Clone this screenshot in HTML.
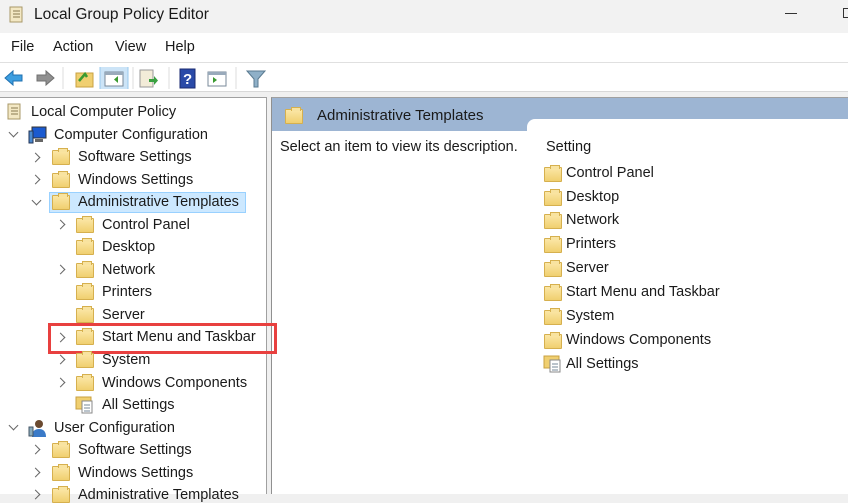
<!DOCTYPE html>
<html><head><meta charset="utf-8"><style>
*{margin:0;padding:0;box-sizing:border-box}
body{width:848px;height:494px;overflow:hidden;background:#f0f0f0;font-family:"Liberation Sans",sans-serif;font-size:14.5px;color:#1a1a1a;position:relative}
.a{position:absolute;white-space:nowrap}
.f{position:absolute;width:18px;height:15px;background:linear-gradient(#fbe7a6,#f0cf70);border:1px solid #d6b04e;border-radius:1px}
.f:before{content:"";position:absolute;right:1px;top:-3px;width:8px;height:3px;background:#f8e3a0;border:1px solid #d6b04e;border-bottom:none}
.ch{position:absolute;width:7px;height:7px;border-right:1.3px solid #666;border-bottom:1.3px solid #666}
.r{transform:rotate(-45deg)}
.d{transform:rotate(45deg)}
</style></head><body>
<!-- title -->
<div class="a" style="left:0;top:0;width:848px;height:33px;background:#f2f2f2"></div>
<svg class="a" style="left:7px;top:5px" width="18" height="20"><rect x="3" y="2" width="12" height="15" fill="#f3e8c4" stroke="#a89868"/><path d="M6 6h7M6 9h7M6 12h7" stroke="#8a7a50"/></svg>
<div class="a" style="left:34px;top:6px;font-size:15.5px">Local Group Policy Editor</div>
<div class="a" style="left:785px;top:13px;width:12px;height:1px;background:#333"></div>
<div class="a" style="left:843px;top:8px;width:10px;height:10px;border:1px solid #333"></div>
<!-- menu -->
<div class="a" style="left:0;top:33px;width:848px;height:29px;background:#fff"></div>
<div class="a" style="left:11px;top:39px">File</div>
<div class="a" style="left:53px;top:39px">Action</div>
<div class="a" style="left:115px;top:39px">View</div>
<div class="a" style="left:165px;top:39px">Help</div>
<!-- toolbar -->
<div class="a" style="left:0;top:62px;width:848px;height:30px;background:#fff;border-top:1px solid #e0e0e0;border-bottom:1px solid #d8d8d8"></div>
<svg class="a" style="left:3px;top:67px" width="280" height="22">
<path d="M2 11l8-7v4h9v6h-9v4z" fill="#3d9ee0" stroke="#2070b0"/>
<path d="M51 11l-8-7v4h-9v6h9v4z" fill="#909090" stroke="#707070"/>
<line x1="60" y1="0" x2="60" y2="22" stroke="#ddd"/>
<rect x="73" y="6" width="17" height="14" fill="#f0cf70" stroke="#c9a040"/><path d="M76 14l6-7 2 3" stroke="#3a9a30" stroke-width="2.5" fill="none"/>
<rect x="97" y="-2" width="28" height="26" fill="#cce4f7" stroke="#99c8ee"/>
<rect x="102" y="5" width="18" height="14" fill="#fff" stroke="#7a8a9a"/><rect x="102" y="5" width="18" height="3" fill="#9ab"/><path d="M115 9v7l-4-3.5z" fill="#3a9a30"/>
<line x1="130" y1="0" x2="130" y2="22" stroke="#ddd"/>
<rect x="137" y="3" width="13" height="17" fill="#f3ecd8" stroke="#999"/><path d="M146 12h5v-3l4 4.5-4 4.5v-3h-5z" fill="#3aa040"/>
<line x1="166" y1="0" x2="166" y2="22" stroke="#ddd"/>
<rect x="177" y="2" width="15" height="19" fill="#2a4aa8" stroke="#1a2a70"/><text x="180" y="17" fill="#fff" font-size="15" font-family="Liberation Sans" font-weight="bold">?</text>
<rect x="205" y="5" width="18" height="14" fill="#fff" stroke="#7a8a9a"/><rect x="205" y="5" width="18" height="3" fill="#9ab"/><path d="M210 10v6l4-3z" fill="#3a9a30"/>
<line x1="233" y1="0" x2="233" y2="22" stroke="#ddd"/>
<path d="M244 4h18l-7 8v8h-4v-8z" fill="#8fb0c8" stroke="#5a7a90"/>
</svg>
<!-- left pane -->
<div class="a" style="left:0;top:97px;width:267px;height:397px;background:#fff;border-top:1px solid #a0a0a0;border-right:1px solid #a0a0a0"></div>
<!-- right pane -->
<div class="a" style="left:271px;top:97px;width:577px;height:397px;background:#fff;border-top:1px solid #a0a0a0;border-left:1px solid #909090"></div>
<div class="a" style="left:272px;top:98px;width:576px;height:33px;background:#9db5d3"></div>
<div class="a" style="left:527px;top:119px;width:321px;height:14px;background:#fff;border-top-left-radius:8px"></div>
<div class="f" style="left:285px;top:109px"></div>
<div class="a" style="left:317px;top:107px;font-size:15px;color:#1a1a1a">Administrative Templates</div>
<div class="a" style="left:280px;top:139px">Select an item to view its description.</div>
<div class="a" style="left:546px;top:139px">Setting</div>
<div class="f" style="left:544px;top:167px"></div><div class="a" style="left:566px;top:165px">Control Panel</div>
<div class="f" style="left:544px;top:191px"></div><div class="a" style="left:566px;top:189px">Desktop</div>
<div class="f" style="left:544px;top:214px"></div><div class="a" style="left:566px;top:212px">Network</div>
<div class="f" style="left:544px;top:238px"></div><div class="a" style="left:566px;top:236px">Printers</div>
<div class="f" style="left:544px;top:262px"></div><div class="a" style="left:566px;top:260px">Server</div>
<div class="f" style="left:544px;top:286px"></div><div class="a" style="left:566px;top:284px">Start Menu and Taskbar</div>
<div class="f" style="left:544px;top:310px"></div><div class="a" style="left:566px;top:308px">System</div>
<div class="f" style="left:544px;top:334px"></div><div class="a" style="left:566px;top:332px">Windows Components</div>
<svg class="a" style="left:543px;top:353px" width="22" height="20"><rect x="1" y="3" width="15" height="12" fill="#f0cf70" stroke="#c9a040"/><rect x="7" y="7" width="10" height="12" fill="#fff" stroke="#888"/><path d="M9 11h6M9 14h6M9 17h6" stroke="#789"/></svg>
<div class="a" style="left:566px;top:356px">All Settings</div>
<!-- tree -->
<svg class="a" style="left:5px;top:102px" width="18" height="20"><rect x="3" y="2" width="12" height="15" fill="#f3e8c4" stroke="#a89868"/><path d="M6 6h7M6 9h7M6 12h7" stroke="#8a7a50"/></svg>
<div class="a" style="left:31px;top:104px">Local Computer Policy</div>
<div class="ch d" style="left:10px;top:129px"></div>
<svg class="a" style="left:28px;top:125px" width="20" height="20"><rect x="4" y="2" width="14" height="11" fill="#1a5ad0" stroke="#333"/><rect x="7" y="14" width="8" height="3" fill="#666"/><rect x="1" y="6" width="4" height="12" fill="#4a8ad0" stroke="#235"/></svg>
<div class="a" style="left:54px;top:127px">Computer Configuration</div>
<div class="ch r" style="left:32px;top:154px"></div><div class="f" style="left:52px;top:150px"></div><div class="a" style="left:78px;top:149px">Software Settings</div>
<div class="ch r" style="left:32px;top:176px"></div><div class="f" style="left:52px;top:173px"></div><div class="a" style="left:78px;top:172px">Windows Settings</div>
<div class="a" style="left:49px;top:192px;width:197px;height:21px;background:#cce8ff;border:1px solid #99d1ff"></div>
<div class="ch d" style="left:33px;top:197px"></div><div class="f" style="left:52px;top:195px"></div><div class="a" style="left:78px;top:194px">Administrative Templates</div>
<div class="ch r" style="left:57px;top:221px"></div><div class="f" style="left:76px;top:218px"></div><div class="a" style="left:102px;top:217px">Control Panel</div>
<div class="f" style="left:76px;top:240px"></div><div class="a" style="left:102px;top:239px">Desktop</div>
<div class="ch r" style="left:57px;top:266px"></div><div class="f" style="left:76px;top:263px"></div><div class="a" style="left:102px;top:262px">Network</div>
<div class="f" style="left:76px;top:285px"></div><div class="a" style="left:102px;top:284px">Printers</div>
<div class="f" style="left:76px;top:308px"></div><div class="a" style="left:102px;top:307px">Server</div>
<div class="ch r" style="left:57px;top:334px"></div><div class="f" style="left:76px;top:330px"></div><div class="a" style="left:102px;top:329px">Start Menu and Taskbar</div>
<div class="a" style="left:48px;top:323px;width:229px;height:31px;border:3px solid #e8403f"></div>
<div class="ch r" style="left:57px;top:356px"></div><div class="f" style="left:76px;top:353px"></div><div class="a" style="left:102px;top:352px">System</div>
<div class="ch r" style="left:57px;top:379px"></div><div class="f" style="left:76px;top:376px"></div><div class="a" style="left:102px;top:375px">Windows Components</div>
<svg class="a" style="left:75px;top:394px" width="22" height="20"><rect x="1" y="3" width="15" height="12" fill="#f0cf70" stroke="#c9a040"/><rect x="7" y="7" width="10" height="12" fill="#fff" stroke="#888"/><path d="M9 11h6M9 14h6M9 17h6" stroke="#789"/></svg>
<div class="a" style="left:102px;top:397px">All Settings</div>
<div class="ch d" style="left:10px;top:422px"></div>
<svg class="a" style="left:28px;top:418px" width="20" height="20"><circle cx="11" cy="6" r="4" fill="#6a4a30"/><path d="M4 19c0-6 3-8 7-8s7 2 7 8z" fill="#3a7ac8"/><rect x="1" y="9" width="4" height="9" fill="#8ab" stroke="#456"/></svg>
<div class="a" style="left:54px;top:420px">User Configuration</div>
<div class="ch r" style="left:32px;top:446px"></div><div class="f" style="left:52px;top:443px"></div><div class="a" style="left:78px;top:442px">Software Settings</div>
<div class="ch r" style="left:32px;top:469px"></div><div class="f" style="left:52px;top:466px"></div><div class="a" style="left:78px;top:465px">Windows Settings</div>
<div class="ch r" style="left:32px;top:491px"></div><div class="f" style="left:52px;top:488px"></div><div class="a" style="left:78px;top:487px">Administrative Templates</div>
</body></html>
